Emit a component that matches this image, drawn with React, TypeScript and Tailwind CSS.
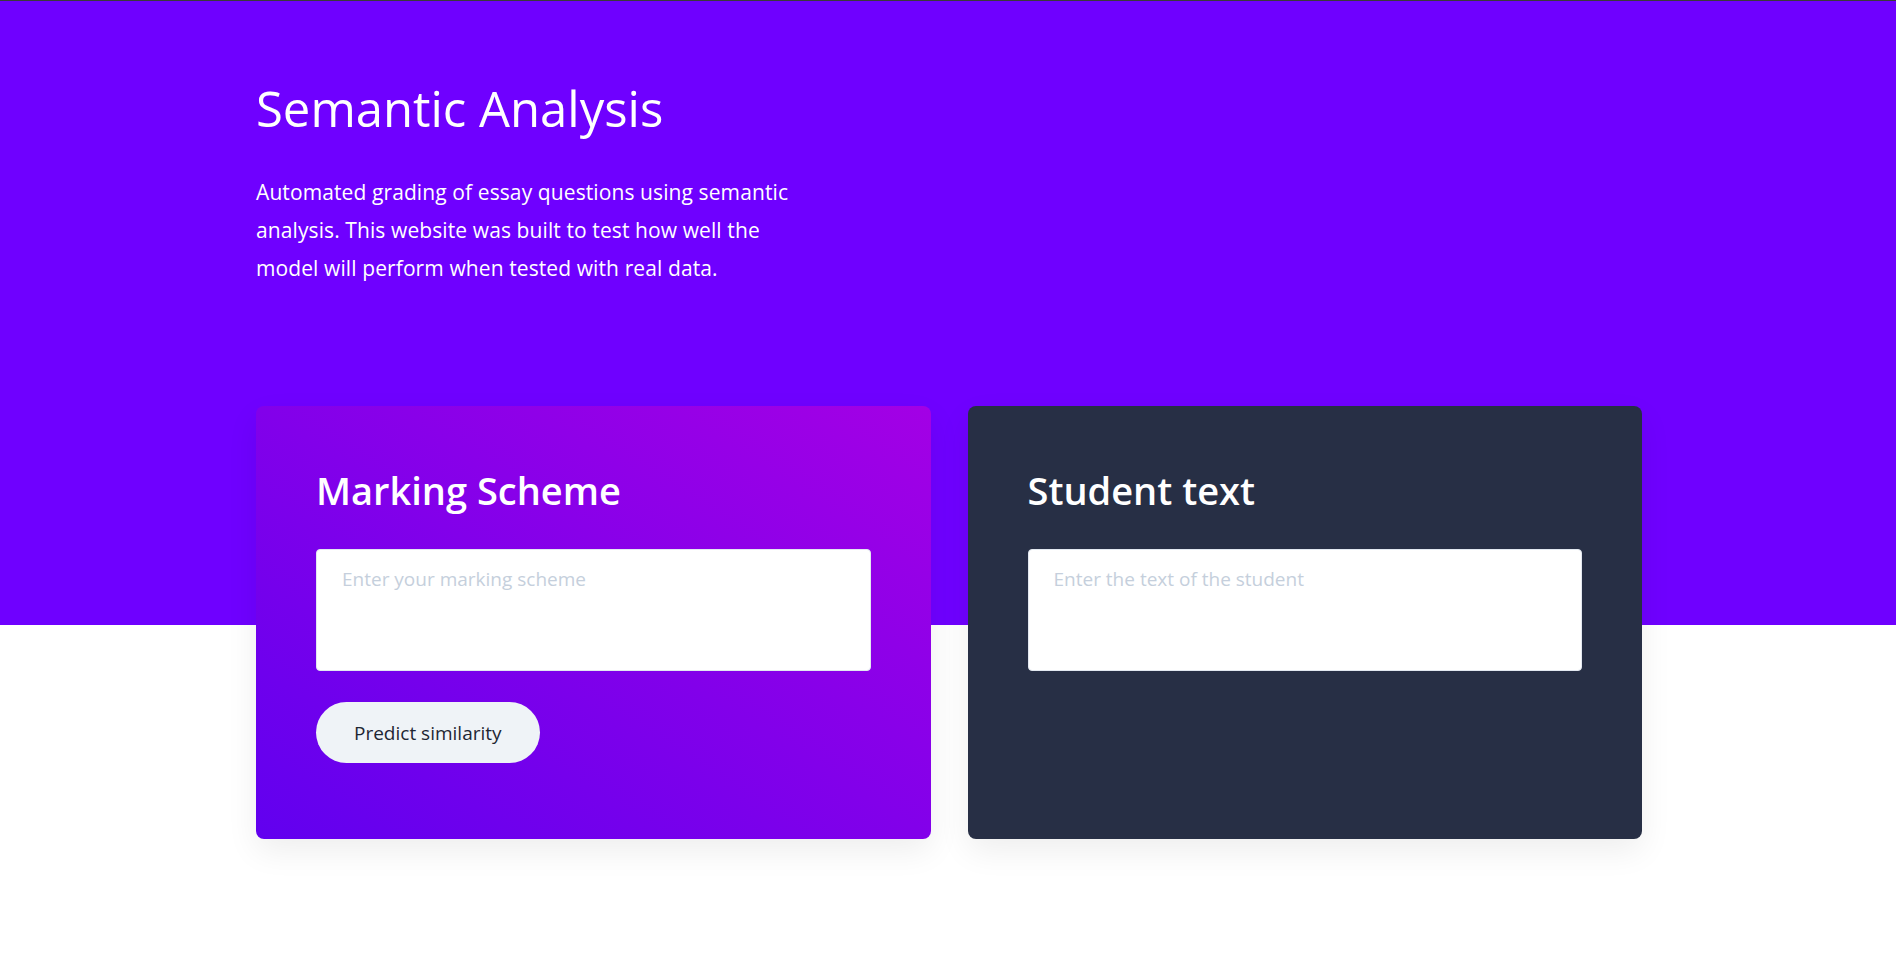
import { useState } from "react";

export default function App() {
  const [scheme, setScheme] = useState("");
  const [student, setStudent] = useState("");

  return (
    <div className="min-h-screen border-t border-[#3a3a3a] bg-[linear-gradient(to_bottom,#6f00ff_624px,#ffffff_624px)] font-['Open_Sans','Lato',sans-serif]">
      <div className="mx-auto w-[1386px] translate-x-[1px] pt-[79px] pb-[80px]">
        {/* Hero */}
        <h1 className="text-[49px] leading-[1.18] font-normal text-white">Semantic Analysis</h1>
        <p className="mt-[35px] max-w-[560px] text-[21px] leading-[38px] tracking-[0.1px] text-white">
          Automated grading of essay questions using semantic analysis. This website was built to test how well the
          model will perform when tested with real data.
        </p>

        {/* Cards */}
        <div className="mt-[119px] grid grid-cols-2 gap-[37px]">
          <div className="rounded-lg bg-[linear-gradient(to_top_right,#6100ef,#a300e5)] px-[60px] pt-[60px] pb-[76px] shadow-[0_12px_32px_rgba(0,0,0,0.07)]">
            <h2 className="text-[38px] leading-[49.5px] font-semibold text-white">Marking Scheme</h2>
            <textarea
              value={scheme}
              onChange={(e) => setScheme(e.target.value)}
              placeholder="Enter your marking scheme"
              className="mt-[34px] block h-[122px] w-full resize-none rounded-[4px] border border-[#e2e8f0] bg-white px-[25px] pt-[15px] text-[19px] leading-[1.5] text-slate-800 placeholder:text-[#c5cfdc] outline-none"
            />
            <button className="mt-[31px] h-[61px] rounded-full bg-[#eff3f7] px-[38px] text-[19px] text-[#1e2633]">
              Predict similarity
            </button>
          </div>

          <div className="rounded-lg bg-[#272f45] px-[60px] pt-[60px] pb-[76px] shadow-[0_12px_32px_rgba(0,0,0,0.07)]">
            <h2 className="text-[38px] leading-[49.5px] font-semibold text-white">Student text</h2>
            <textarea
              value={student}
              onChange={(e) => setStudent(e.target.value)}
              placeholder="Enter the text of the student"
              className="mt-[34px] block h-[122px] w-full resize-none rounded-[4px] border border-[#e2e8f0] bg-white px-[25px] pt-[15px] text-[19px] leading-[1.5] text-slate-800 placeholder:text-[#c5cfdc] outline-none"
            />
          </div>
        </div>
      </div>
    </div>
  );
}
